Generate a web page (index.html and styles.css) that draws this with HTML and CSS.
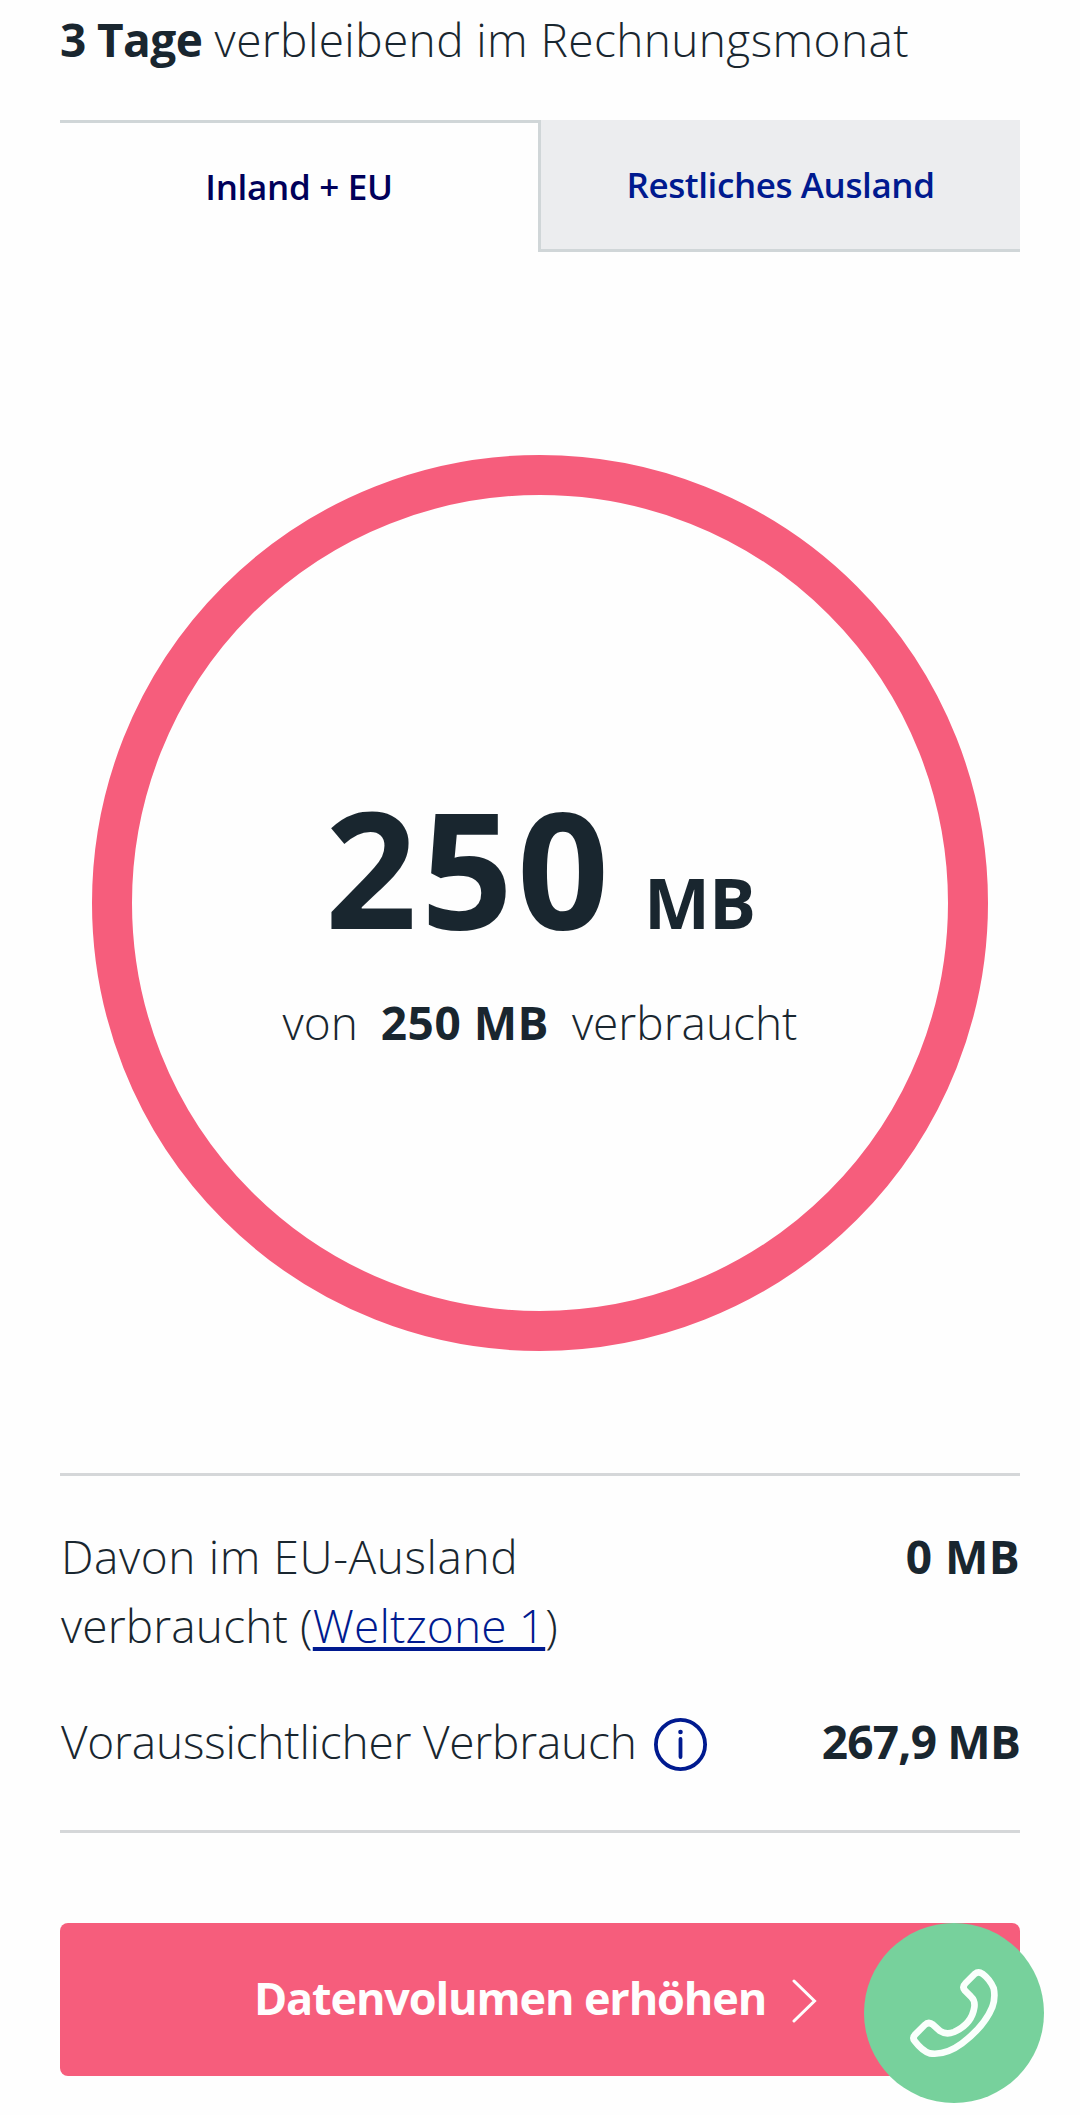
FILE: index.html
```html
<!DOCTYPE html>
<html lang="de">
<head>
    <meta charset="UTF-8">
    <meta name="viewport" content="width=device-width, initial-scale=1.0">
    <title>Datenverbrauch</title>
    <link rel="stylesheet" href="styles.css">
</head>
<body>
    <div class="container">
        <p class="remaining"><strong>3 Tage</strong> <span>verbleibend im Rechnungsmonat</span></p>

        <div class="tabs">
            <a class="tab active">Inland + EU</a>
            <a class="tab">Restliches Ausland</a>
        </div>

        <div class="meter">
            <div class="used">
                <span class="used-value">250</span>
                <span class="used-unit">MB</span>
            </div>
            <div class="total">
                <span>von</span>
                <strong>250 MB</strong>
                <span>verbraucht</span>
            </div>
        </div>

        <div class="details">
            <div class="row">
                <div class="label"><span class="label-eu">Davon im EU-Ausland</span><br>verbraucht (<a class="link" href="#">Weltzone 1</a>)</div>
                <strong class="value">0 MB</strong>
            </div>
            <div class="row">
                <div class="label forecast">
                    Voraussichtlicher Verbrauch
                    <svg class="info" viewBox="0 0 53 53">
                        <circle cx="26.5" cy="26.5" r="24.6" />
                        <path d="M26.5 21v18" />
                        <circle class="dot" cx="26.5" cy="14" r="2.3" />
                    </svg>
                </div>
                <strong class="value forecast-value">267,9 MB</strong>
            </div>
        </div>

        <a class="button">
            <span class="button-text">Datenvolumen erhöhen</span>
            <svg class="chevron" viewBox="0 0 25 44">
                <path d="M2 2l20.5 20L2 42" />
            </svg>
        </a>
    </div>

    <a class="call">
        <svg viewBox="0 0 330 330">
            <path d="M224 42Q235 33 247 41Q270 58 281 85Q287 112 277 141C262 178 227 219 186 250C155 273 122 285 89 280Q67 273 44 243Q36 233 46 223L74 195Q86 183 99 194L120 213Q138 225 162 216C194 202 218 176 223 142Q226 122 213 110L195 92Q185 81 197 69Z" />
        </svg>
    </a>
</body>
</html>
```
FILE: styles.css
```css
body {
    font-family: 'Open Sans', sans-serif;
    font-size: 46px;
    font-weight: 300;
    line-height: 69px;
    color: #19262f;
    background: #fefefe;
    margin: 0;
    position: relative;
    height: 2115px;
    overflow: hidden;
    white-space: nowrap;
}
* {
    box-sizing: border-box;
}
strong {
    font-weight: 700;
}
.container {
    padding: 5px 60px 0;
}
.remaining {
    margin: 0;
    height: 115px;
    letter-spacing: 0.4px;
}
.remaining strong {
    letter-spacing: -0.6px;
}
.tabs {
    display: grid;
    grid-template-columns: 478px 482px;
    height: 132px;
}
.tab {
    display: flex;
    align-items: center;
    justify-content: center;
    font-size: 35px;
    font-weight: 650;
    letter-spacing: -0.4px;
    color: #001a8f;
    background: #ecedef;
    border-left: 3px solid #d0d6d8;
    border-bottom: 3px solid #d0d6d8;
}
.tab.active {
    color: #00005a;
    background: none;
    border: none;
    border-top: 3px solid #d0d6d8;
    padding-bottom: 3px;
    letter-spacing: -0.3px;
}
.meter {
    width: 896px;
    height: 896px;
    margin: 203px auto 122px;
    padding-top: 292px;
    border: 40px solid #f65d7c;
    border-radius: 50%;
}
.used {
    display: flex;
    align-items: baseline;
    justify-content: center;
    gap: 31px;
    font-weight: 700;
    line-height: 160px;
}
.used-value {
    font-size: 161px;
    letter-spacing: 4px;
}
.used-unit {
    font-size: 70px;
    line-height: 70px;
    letter-spacing: -1px;
}
.total {
    display: flex;
    justify-content: center;
    gap: 23px;
    margin-top: 41px;
}
.total strong {
    letter-spacing: 0.5px;
}
.details {
    display: flex;
    flex-direction: column;
    gap: 47px;
    padding: 46px 0 54px;
    border-top: 3px solid #d5d7d9;
    border-bottom: 3px solid #d5d7d9;
}
.row {
    display: flex;
    justify-content: space-between;
}
.label {
    padding-left: 1px;
    letter-spacing: 0.15px;
}
.label-eu {
    letter-spacing: 0.6px;
}
.value {
    letter-spacing: 0.4px;
}
.link {
    color: #001a8f;
    text-decoration-thickness: 4px;
    text-underline-offset: 4px;
    text-decoration-skip-ink: none;
}
.forecast {
    display: flex;
    align-items: center;
    gap: 17px;
    letter-spacing: -0.2px;
}
.info {
    width: 53px;
    height: 53px;
    margin-top: 5px;
    fill: none;
    stroke: #001a8f;
    stroke-width: 3.8;
    stroke-linecap: round;
}
.info .dot {
    fill: #001a8f;
    stroke: none;
}
.forecast-value {
    letter-spacing: -0.8px;
}
.button {
    display: flex;
    align-items: center;
    justify-content: center;
    gap: 26px;
    height: 153px;
    margin-top: 90px;
    padding-right: 9px;
    font-size: 45px;
    font-weight: 700;
    letter-spacing: -1.15px;
    color: #fefefe;
    background: #f65d7c;
    border-radius: 8px;
}
.button-text {
    padding-bottom: 5px;
}
.chevron {
    width: 25px;
    height: 44px;
    margin-top: 2px;
    fill: none;
    stroke: #fefefe;
    stroke-width: 3;
    stroke-linecap: round;
}
/* floating call button */
.call {
    position: absolute;
    right: 36px;
    bottom: 12px;
    width: 180px;
    height: 180px;
    padding: 37px 34px 33px 36px;
    background: #77d19c;
    border-radius: 50%;
}
.call svg {
    display: block;
    width: 110px;
    height: 110px;
    fill: none;
    stroke: #fafffc;
    stroke-width: 20;
    stroke-linejoin: round;
}
```
